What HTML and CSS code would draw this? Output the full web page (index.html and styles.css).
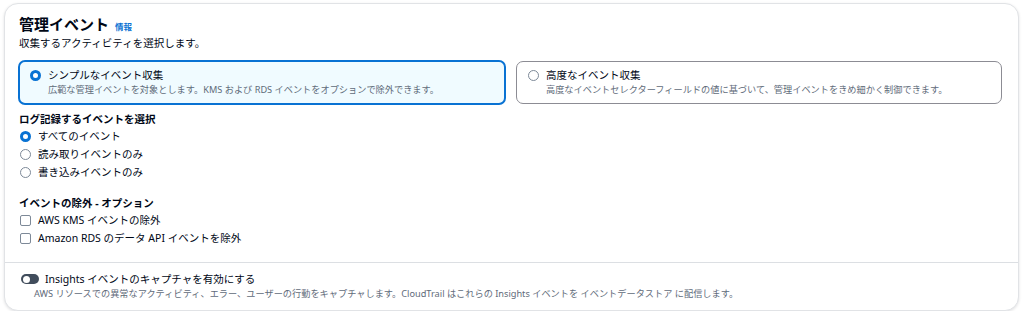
FILE: index.html
```html
<!DOCTYPE html>
<html lang="ja">
<head>
    <meta charset="UTF-8">
    <meta name="viewport" content="width=device-width, initial-scale=1.0">
    <title>管理イベント</title>
    <link rel="stylesheet" href="styles.css">
</head>
<body>
    <!-- Management events panel -->
    <div class="panel">
        <div class="panel-body">
            <h2 class="panel-title">管理イベント <a href="#" class="info-link">情報</a></h2>
            <p class="panel-desc">収集するアクティビティを選択します。</p>

            <div class="tiles">
                <label class="tile selected">
                    <span class="radio checked"></span>
                    <span class="tile-text">
                        <span class="tile-label">シンプルなイベント収集</span>
                        <span class="tile-desc">広範な管理イベントを対象とします。KMS および RDS イベントをオプションで除外できます。</span>
                    </span>
                </label>
                <label class="tile">
                    <span class="radio"></span>
                    <span class="tile-text">
                        <span class="tile-label">高度なイベント収集</span>
                        <span class="tile-desc">高度なイベントセレクターフィールドの値に基づいて、管理イベントをきめ細かく制御できます。</span>
                    </span>
                </label>
            </div>

            <h3 class="group-title">ログ記録するイベントを選択</h3>
            <ul class="choice-list">
                <li><span class="radio checked"></span>すべてのイベント</li>
                <li><span class="radio"></span>読み取りイベントのみ</li>
                <li><span class="radio"></span>書き込みイベントのみ</li>
            </ul>

            <h3 class="group-title spaced">イベントの除外 - オプション</h3>
            <ul class="choice-list">
                <li><span class="checkbox"></span>AWS KMS イベントの除外</li>
                <li><span class="checkbox"></span>Amazon RDS のデータ API イベントを除外</li>
            </ul>
        </div>

        <div class="panel-footer">
            <div class="toggle-row">
                <span class="toggle"></span>
                <span>Insights イベントのキャプチャを有効にする</span>
            </div>
            <p class="toggle-desc">AWS リソースでの異常なアクティビティ、エラー、ユーザーの行動をキャプチャします。CloudTrail はこれらの Insights イベントを イベントデータストア に配信します。</p>
        </div>
    </div>
</body>
</html>
```

FILE: styles.css
```css
/* General Styles */
body {
    margin: 0;
    padding: 3px 5px 0 4px;
    background-color: #ffffff;
    font-family: "Noto Sans", "Noto Sans CJK JP", sans-serif;
    font-size: 10.5px;
    color: #000716;
}

ul {
    list-style: none;
    margin: 0;
    padding: 0;
}

/* Panel */
.panel {
    height: 306px;
    border: 1px solid #e1e3e6;
    border-radius: 14px;
    background-color: #ffffff;
    box-shadow: 0 1px 3px rgba(0, 7, 22, 0.12);
    display: flex;
    flex-direction: column;
}

.panel-body {
    padding: 9px 14px 0 14px;
    flex: 1;
}

.panel-title {
    margin: 0;
    font-size: 15px;
    line-height: 22px;
    font-weight: 700;
}

.info-link {
    font-size: 8.5px;
    line-height: 1;
    color: #0972d3;
    text-decoration: none;
    font-weight: 700;
    margin-left: 2px;
}

.panel-desc {
    margin: 0;
    line-height: 16px;
}

/* Selection tiles */
.tiles {
    display: grid;
    grid-template-columns: 1fr 1fr;
    gap: 9px;
    margin: 9px 1px 0 -1px;
}

.tile {
    display: flex;
    align-items: flex-start;
    gap: 7px;
    padding: 5px 11px 7px 11px;
    border: 1px solid #8c8c94;
    margin: 1px;
    border-radius: 7px;
    cursor: pointer;
}

.tile.selected {
    border: 2px solid #0972d3;
    margin: 0;
    padding: 5px 10px 7px 10px;
    background-color: #f0fbff;
}

.tile .radio {
    margin-top: 2.5px;
}

.tile-text {
    display: flex;
    flex-direction: column;
}

.tile-label {
    line-height: 16px;
}

.tile-desc {
    font-size: 9.2px;
    line-height: 13px;
    color: #5f6b7a;
}

/* Radio & checkbox groups */
.group-title {
    margin: 6px 0 0 0;
    font-size: 10.5px;
    line-height: 16px;
    font-weight: 700;
}

.group-title.spaced {
    margin-top: 14px;
}

.choice-list li {
    display: flex;
    align-items: center;
    gap: 7px;
    line-height: 18px;
    padding-left: 1px;
}

.radio {
    width: 11px;
    height: 11px;
    box-sizing: border-box;
    border: 1.5px solid #7d8998;
    border-radius: 50%;
    background-color: #ffffff;
    flex-shrink: 0;
}

.radio.checked {
    border: 3.5px solid #0972d3;
}

.checkbox {
    width: 11px;
    height: 11px;
    box-sizing: border-box;
    border: 1.5px solid #7d8998;
    border-radius: 2px;
    background-color: #ffffff;
    flex-shrink: 0;
}

/* Footer with toggle */
.panel-footer {
    border-top: 1px solid #dcdfe3;
    margin-top: 15px;
    padding: 8px 14px 9px 15px;
}

.toggle-row {
    display: flex;
    align-items: center;
    gap: 6px;
    line-height: 16px;
    padding-left: 1px;
}

.toggle {
    width: 18px;
    height: 10px;
    border-radius: 5px;
    background-color: #414d5c;
    position: relative;
    flex-shrink: 0;
}

.toggle::after {
    content: "";
    position: absolute;
    left: 1.5px;
    top: 1.5px;
    width: 7px;
    height: 7px;
    border-radius: 50%;
    background-color: #ffffff;
}

.toggle-desc {
    margin: 0 0 0 14px;
    font-size: 9.2px;
    line-height: 14px;
    color: #5f6b7a;
}
```
